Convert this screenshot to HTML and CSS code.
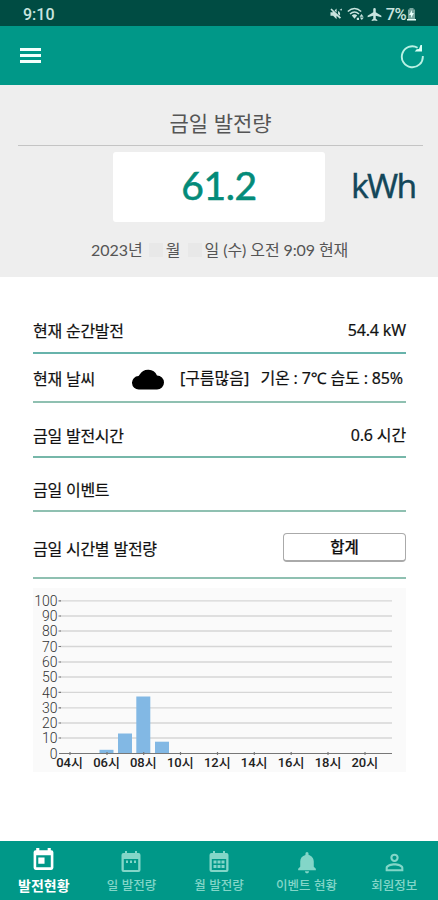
FILE: index.html
```html
<!DOCTYPE html>
<html lang="ko">

<head>
    <meta charset="UTF-8">
    <meta name="viewport" content="width=device-width, initial-scale=1.0">
    <title>발전현황</title>
    <link rel="stylesheet" href="styles.css">
</head>

<body>
    <div class="status-bar">
        <span class="clock">9:10</span>
        <div class="status-icons">
            <svg width="14" height="14" viewBox="0 0 24 24"><path fill="currentColor" d="M4.300 2.500 2.500 4.300 7 8.800H2.500v6.400h4.500l6 6v-6.400l5.500 5.500 2.200-2.200zM13 2.500l-3.500 3.500 3.500 3.500zM15.500 7v5l3 3c1.500-3 .5-6.500-3-8zM18 5l4-2.500v3.500z"/></svg>
            <svg class="wifi" width="17" height="14" viewBox="0 0 17 14"><g fill="none" stroke="currentColor" stroke-width="1.500"><path d="M.8 4.500Q7.500-1.500 14.200 4.500M3 7Q7.500 3 12 7"/></g><path fill="currentColor" d="M4.800 8.500Q7.500 6 10.200 8.500L7.500 11.800zM14.500 7l2 2.800h-4zM14.800 13l-2-2.500h4zM9.800 10.800h2.200v2.200H9.800z"/></svg>
            <svg width="15" height="15" viewBox="0 0 24 24"><path fill="currentColor" d="M23 16.500V14l-9-5.500V3.500a2 2 0 0 0-4 0v5L1 14v2.500L10 14v4.800l-2.500 2V22.500l4.500-1 4.500 1v-1.700l-2.500-2V14z"/></svg>
            <span class="percent">7%</span>
            <svg width="9" height="13" viewBox="0 0 9 13"><path fill="currentColor" opacity=".6" d="M2.500 0h4v1.500H8V12H1V1.500h1.500z"/><path fill="#e6fffa" d="M5 2 2 7h2v3l3-5H5zM0 11h9v1.500H0z"/></svg>
        </div>
    </div>

    <header class="app-bar">
        <svg width="22" height="16" viewBox="0 0 22 16"><path fill="#f3fffc" d="M0 0h21v3H0zM0 6h21v3H0zM0 12h21v3H0z"/></svg>
        <svg width="25" height="26" viewBox="0 0 25 26"><path fill="none" stroke="#b9f1e4" stroke-width="1.900" d="M22.800 13A10.500 10.500 0 1 1 17.600 4.700"/><path fill="#d8fff5" d="M22 2v6.500h-7.300l2-2.200 2.300-.3L20.500 2z"/></svg>
    </header>

    <section class="summary">
        <h1>금일 발전량</h1>
        <div class="power">
            <div class="power-value">61.2</div>
            <div class="power-unit">kWh</div>
        </div>
        <p class="date"><span>2023년</span><i class="blank"></i><span>월</span><i class="blank"></i><span>일</span><span class="time">(수) 오전 9:09 현재</span></p>
    </section>

    <main class="details">
        <div class="row row-now">
            <span class="label">현재 순간발전</span>
            <span class="value">54.4 kW</span>
        </div>
        <div class="row row-weather">
            <span class="label">현재 날씨</span>
            <svg class="cloud" width="32" height="22" viewBox="0 0 32 22"><path d="M7 21.500A6.700 6.700 0 0 1 6.500 8C7 7.700 7 7.300 7.700 6.500A9.800 9.800 0 0 1 25 7.500a7 7 0 0 1 0 14z"/></svg>
            <span>[구름많음]</span>
            <span class="temp">기온 : 7℃ 습도 : 85%</span>
        </div>
        <div class="row row-hours">
            <span class="label">금일 발전시간</span>
            <span class="value">0.6 시간</span>
        </div>
        <div class="row row-event">
            <span class="label">금일 이벤트</span>
        </div>
        <div class="row row-hourly">
            <span class="label">금일 시간별 발전량</span>
            <button type="button" class="total-btn">합계</button>
        </div>

        <svg class="chart" width="373" height="184" viewBox="33 588 373 184">
            <g class="grid">
                <path d="M60 600.800H392M60 616H392M60 631H392M60 646.500H392M60 662H392M60 677H392M60 692.300H392M60 707.800H392M60 723H392M60 738H392"/>
            </g>
            <g class="bars">
                <rect x="99.500" y="749.800" width="14" height="3.500"/>
                <rect x="118" y="733.500" width="14" height="20"/>
                <rect x="136.300" y="696.500" width="14" height="57"/>
                <rect x="155" y="741.700" width="14" height="12"/>
            </g>
            <path class="axis" d="M59 753.500H392M70 752v3M107 752v3M143.700 752v3M180.500 752v3M217.500 752v3M254.300 752v3M291.200 752v3M328 752v3M365 752v3"/>
            <path class="ticks" d="M58.500 600.800h2.500M58.500 616h2.500M58.500 631h2.500M58.500 646.500h2.500M58.500 662h2.500M58.500 677h2.500M58.500 692.300h2.500M58.500 707.800h2.500M58.500 723h2.500M58.500 738h2.500"/>
            <g class="y-labels">
                <text x="57.500" y="606">100</text>
                <text x="57.500" y="621">90</text>
                <text x="57.500" y="636.300">80</text>
                <text x="57.500" y="651.800">70</text>
                <text x="57.500" y="667">60</text>
                <text x="57.500" y="682">50</text>
                <text x="57.500" y="697.500">40</text>
                <text x="57.500" y="713">30</text>
                <text x="57.500" y="728">20</text>
                <text x="57.500" y="743.200">10</text>
                <text x="57.500" y="758.800">0</text>
            </g>
            <g class="x-labels">
                <text x="69.500" y="767">04시</text>
                <text x="106.500" y="767">06시</text>
                <text x="143.300" y="767">08시</text>
                <text x="180.300" y="767">10시</text>
                <text x="217.300" y="767">12시</text>
                <text x="254.200" y="767">14시</text>
                <text x="291" y="767">16시</text>
                <text x="328" y="767">18시</text>
                <text x="364.800" y="767">20시</text>
            </g>
        </svg>
    </main>

    <nav class="tabs">
        <a class="tab active">
            <svg width="25" height="25" viewBox="0 0 24 24"><path fill="currentColor" fill-rule="evenodd" d="M4.500 3H5V1h3v2h8V1h3v2h.5a2 2 0 0 1 2 2v15a2 2 0 0 1-2 2h-15a2 2 0 0 1-2-2V5a2 2 0 0 1 2-2zm.5 5v11.500h14V8zM7 10h6v6H7z"/></svg>
            <span>발전현황</span>
        </a>
        <a class="tab">
            <svg width="24" height="24" viewBox="0 0 24 24"><path fill="currentColor" fill-rule="evenodd" d="M4.500 3H6V1h2v2h8V1h2v2h1.500a2 2 0 0 1 2 2v15a2 2 0 0 1-2 2h-15a2 2 0 0 1-2-2V5a2 2 0 0 1 2-2zm.3 6v11h14.400V9zM7 10.500h2v2.500H7zM11 10.500h2v2.500h-2zM15 10.500h2v2.500h-2z"/></svg>
            <span>일 발전량</span>
        </a>
        <a class="tab">
            <svg width="24" height="24" viewBox="0 0 24 24"><path fill="currentColor" fill-rule="evenodd" d="M4.500 3H6V1h2v2h8V1h2v2h1.500a2 2 0 0 1 2 2v15a2 2 0 0 1-2 2h-15a2 2 0 0 1-2-2V5a2 2 0 0 1 2-2zm.3 6v11h14.400V9zM6.500 10.500h3v3h-3zM10.500 10.500h3v3h-3zM14.500 10.500h3v3h-3zM6.500 15h3v3h-3zM10.500 15h3v3h-3zM14.500 15h3v3h-3z"/></svg>
            <span>월 발전량</span>
        </a>
        <a class="tab">
            <svg width="26" height="25" viewBox="0 0 24 24"><path fill="currentColor" d="M12 22.500a2 2 0 0 0 2-2h-4a2 2 0 0 0 2 2zm6.500-6.500v-5c0-3-1.900-5.600-5-6.300V3.500a1.500 1.500 0 0 0-3 0v1.200C7.400 5.400 5.500 7.900 5.500 11v5l-2 2v1.500h17V18z"/></svg>
            <span>이벤트 현황</span>
        </a>
        <a class="tab">
            <svg width="25" height="25" viewBox="0 0 24 24"><path fill="currentColor" fill-rule="evenodd" d="M12 3.500a4 4 0 1 1 0 8 4 4 0 0 1 0-8zm0 2a2 2 0 1 0 0 4 2 2 0 0 0 0-4zM12 12.800c2.900 0 8.500 1.400 8.500 4.200V20.500h-17V17c0-2.800 5.600-4.200 8.500-4.200zm0 2c-3.200 0-6.500 1.500-6.500 2.200v1.500h13V17c0-.7-3.300-2.200-6.500-2.200z"/></svg>
            <span>회원정보</span>
        </a>
    </nav>
</body>

</html>
```
FILE: styles.css
```css
* {
    box-sizing: border-box;
}

body {
    font-family: "Noto Sans", "Noto Sans CJK KR", sans-serif;
    display: flex;
    flex-direction: column;
    height: 900px;
    margin: 0;
    background-color: #fff;
    color: #111;
    overflow: hidden;
    white-space: nowrap;
}

svg {
    display: block;
    flex: none;
}

.status-bar {
    display: flex;
    justify-content: space-between;
    align-items: center;
    height: 26px;
    padding: 2px 22px 0 23px;
    background-color: #004c43;
    color: #c9e4df;
    font-family: Roboto, sans-serif;
    font-size: 16px;
    font-weight: 500;
}

.status-icons {
    display: flex;
    align-items: center;
}

.wifi {
    margin: 0 3px 0 4px;
}

.percent {
    margin: 0 1px 0 4px;
    font-size: 16.5px;
    letter-spacing: -0.7px;
}

.app-bar {
    display: flex;
    justify-content: space-between;
    align-items: center;
    height: 59px;
    padding: 0 13px 0 20px;
    background-color: #009888;
}

.summary {
    height: 192px;
    padding: 19px 15px 0 18px;
    background-color: #eee;
}

h1 {
    height: 42px;
    margin: 0;
    border-bottom: 1px solid #c4c4c4;
    font-family: "Noto Sans CJK KR", sans-serif;
    font-size: 21px;
    font-weight: 400;
    line-height: 37px;
    letter-spacing: -0.1px;
    text-align: center;
    color: #555;
}

.power {
    display: flex;
    align-items: center;
    margin: 6px 0 0 95px;
}

.power-value {
    width: 212px;
    height: 70px;
    border-radius: 3px;
    background-color: #fff;
    font-family: Lato, sans-serif;
    font-size: 39px;
    line-height: 66px;
    letter-spacing: -0.4px;
    text-align: center;
    color: #048b79;
    -webkit-text-stroke: 0.6px #048b79;
}

.power-unit {
    margin: -5px 0 0 26px;
    font-size: 33.5px;
    line-height: 50px;
    letter-spacing: -1.8px;
    color: #14475a;
    -webkit-text-stroke: 0.3px #14475a;
}

.date {
    display: flex;
    align-items: center;
    margin: 16px 0 0 73px;
    font-family: Lato, "Noto Sans CJK KR", sans-serif;
    font-size: 16px;
    line-height: 24px;
    color: #555;
}

.blank {
    width: 14px;
    height: 14px;
    margin: 0 3px 0 6px;
    background-color: #e8e8e8;
}

.date .blank + span {
    margin-right: 1px;
}

.time {
    margin-left: 3px;
    letter-spacing: -0.1px;
}

.details {
    flex: 1;
    padding: 31px 32px 0 33px;
}

.row {
    display: flex;
    justify-content: space-between;
    align-items: center;
    border-bottom: 2px solid #8fc0b1;
    font-size: 16px;
    line-height: 20px;
    -webkit-text-stroke: 0.2px #111;
}

.label {
    font-family: "Noto Sans CJK KR", sans-serif;
    font-size: 16px;
    letter-spacing: -0.3px;
}

.value {
    letter-spacing: -0.15px;
}

.row-now {
    height: 46px;
    border-color: #67b3ab;
}

.row-weather {
    height: 49px;
    justify-content: flex-start;
    padding: 1px 3px 0 0;
}

.cloud {
    margin: 2px 16px 0 37px;
}

.temp {
    margin-left: auto;
    letter-spacing: -0.15px;
}

.row-hours {
    height: 55px;
    padding-top: 10px;
    border-color: #76b7a9;
}

.row-event {
    height: 54px;
    padding-top: 9px;
}

.row-hourly {
    height: 67px;
    padding-top: 6px;
}

.total-btn {
    width: 123px;
    height: 29px;
    padding: 0 0 2px;
    border: 1px solid #aaa;
    border-bottom-width: 2px;
    border-radius: 4px;
    background-color: #fff;
    color: #111;
    font-family: "Noto Sans CJK KR", sans-serif;
    font-size: 15.5px;
    font-weight: 500;
}

.chart {
    margin-top: 9px;
    background-color: #fafafa;
}

.grid path {
    stroke: #d6d6d6;
    stroke-width: 1.3;
}

.bars {
    fill: #82b8e4;
}

.axis,
.ticks {
    fill: none;
    stroke: #777;
    stroke-width: 1.2;
}

.y-labels {
    font: 300 14px Roboto, sans-serif;
    text-anchor: end;
    fill: #333;
}

.x-labels {
    font: 500 13px Roboto, "Noto Sans CJK KR", sans-serif;
    text-anchor: middle;
    fill: #222;
}

.tabs {
    display: grid;
    grid-template-columns: repeat(5, 1fr);
    height: 59px;
    background-color: #009888;
}

.tab {
    display: flex;
    flex-direction: column;
    align-items: center;
    color: #83d6c8;
    font-family: "Noto Sans CJK KR", sans-serif;
    font-size: 12.5px;
    font-weight: 500;
    line-height: 18px;
    padding-top: 9px;
}

.tab span {
    margin-top: auto;
    margin-bottom: 6px;
}

.tab.active {
    padding-top: 6px;
    color: #fff;
    font-size: 14px;
    font-weight: 700;
}
```
